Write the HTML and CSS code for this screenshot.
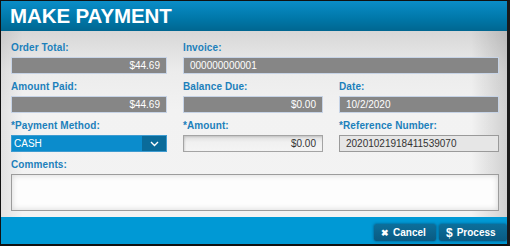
FILE: index.html
```html
<!DOCTYPE html>
<html lang="en">
<head>
  <meta charset="UTF-8">
  <meta name="viewport" content="width=device-width, initial-scale=1.0">
  <title>Make Payment</title>
  <link rel="stylesheet" href="styles.css">
</head>
<body>
  <div class="modal">
    <header class="modal-head">
      <h1>MAKE PAYMENT</h1>
    </header>
    <div class="modal-body">
      <div class="fields">
        <div class="field">
          <label>Order Total:</label>
          <div class="box dark right">$44.69</div>
        </div>
        <div class="field span2">
          <label>Invoice:</label>
          <div class="box dark">000000000001</div>
        </div>

        <div class="field">
          <label>Amount Paid:</label>
          <div class="box dark right">$44.69</div>
        </div>
        <div class="field">
          <label>Balance Due:</label>
          <div class="box dark right">$0.00</div>
        </div>
        <div class="field">
          <label>Date:</label>
          <div class="box dark">10/2/2020</div>
        </div>

        <div class="field">
          <label>*Payment Method:</label>
          <div class="select">
            <span class="select-value">CASH</span>
            <span class="select-arrow">
              <svg width="9" height="6" viewBox="0 0 9 6"><path d="M1 1 L4.5 4.5 L8 1" fill="none" stroke="#fff" stroke-width="1.4"/></svg>
            </span>
          </div>
        </div>
        <div class="field">
          <label>*Amount:</label>
          <div class="box input right">$0.00</div>
        </div>
        <div class="field">
          <label>*Reference Number:</label>
          <div class="box ref">20201021918411539070</div>
        </div>

        <div class="field span3">
          <label>Comments:</label>
          <div class="comments"></div>
        </div>
      </div>
    </div>
    <footer class="modal-foot">
      <button class="btn"><span class="ico">&#10006;</span>Cancel</button>
      <button class="btn"><span class="ico dollar">$</span>Process</button>
    </footer>
  </div>
</body>
</html>
```

FILE: styles.css
```css
* { margin: 0; padding: 0; box-sizing: border-box; }
html, body { width: 510px; height: 246px; overflow: hidden; }
body {
  font-family: 'Liberation Sans', Arial, sans-serif;
  background: #111;
}
.modal {
  width: 510px;
  height: 246px;
  border-top: 1px solid #111;
  border-left: 1px solid #111;
  border-right: 3px solid #1a1a1a;
  border-bottom: 2px solid #111;
  display: flex;
  flex-direction: column;
  background: #f1f1f1;
}
.modal-head {
  height: 30px;
  background: linear-gradient(#0a8dc8, #0077a8 60%, #006690);
  padding-left: 9px;
  display: flex;
  align-items: center;
}
.modal-head h1 {
  color: #fff;
  font-size: 20.5px;
  font-weight: bold;
  letter-spacing: -0.1px;
  line-height: 1;
  padding-top: 1px;
}
.modal-body {
  flex: 1;
  padding: 11px 8px 0 10px;
  background:
    linear-gradient(to right, rgba(0,0,0,0.07), rgba(0,0,0,0) 22px, rgba(0,0,0,0) 470px, rgba(0,0,0,0.14)),
    linear-gradient(#d7d7d7, #ececec 40px, #f2f2f2 80px, #f3f3f3);
}
.fields {
  display: grid;
  grid-template-columns: 156px 140px 160px;
  column-gap: 16px;
  row-gap: 7px;
}
.field { display: flex; flex-direction: column; }
.span2 { grid-column: span 2; }
.span3 { grid-column: span 3; }
.field label {
  font-size: 10px;
  font-weight: bold;
  color: #1c80bb;
  line-height: 12px;
  margin-bottom: 3px;
  letter-spacing: 0.1px;
}
.box {
  height: 17px;
  font-size: 10px;
  line-height: 15px;
  padding: 0 6px;
  white-space: nowrap;
}
.right { text-align: right; }
.dark {
  background: #868686;
  border: 1px solid #c6d3e6;
  color: #fff;
}
.input {
  background: linear-gradient(#dcdcdc, #f0f0f0 40%, #f4f4f4);
  border: 1px solid #a4a4a4;
  color: #333;
  box-shadow: inset 1px 1px 2px rgba(0,0,0,0.12);
}
.ref {
  background: #e6e6e6;
  border: 1px solid #9a9a9a;
  color: #333;
}
.select {
  height: 17px;
  display: flex;
  border: 1px solid #3e9bd0;
  background: #0b8ccc;
}
.select-value {
  flex: 1;
  color: #fff;
  font-size: 10px;
  line-height: 15px;
  padding-left: 2px;
}
.select-arrow {
  width: 24px;
  background: #0a6b9a;
  display: flex;
  align-items: center;
  justify-content: center;
}
.comments {
  height: 37px;
  border: 1px solid #9c9c9c;
  background: #fdfdfd;
  box-shadow: inset 0 0 6px rgba(0,0,0,0.16);
}
.modal-foot {
  height: 27px;
  background: #0099d5;
  display: flex;
  justify-content: flex-end;
  align-items: flex-start;
  gap: 3px;
  padding: 7px 0 0 0;
}
.btn {
  height: 17px;
  border: none;
  border-radius: 2px;
  background: linear-gradient(#0c6f9b, #0a5a82);
  box-shadow: 0 0 3px rgba(0,30,60,0.6);
  color: #fff;
  font-family: 'Liberation Sans', Arial, sans-serif;
  font-size: 10px;
  font-weight: bold;
  padding: 0 7px 0 7px;
  display: flex;
  align-items: center;
  gap: 4px;
}
.btn:first-child { width: 62px; }
.btn:last-child { width: 68px; }
.ico { font-size: 9px; }
.ico.dollar { font-size: 12px; }
```
